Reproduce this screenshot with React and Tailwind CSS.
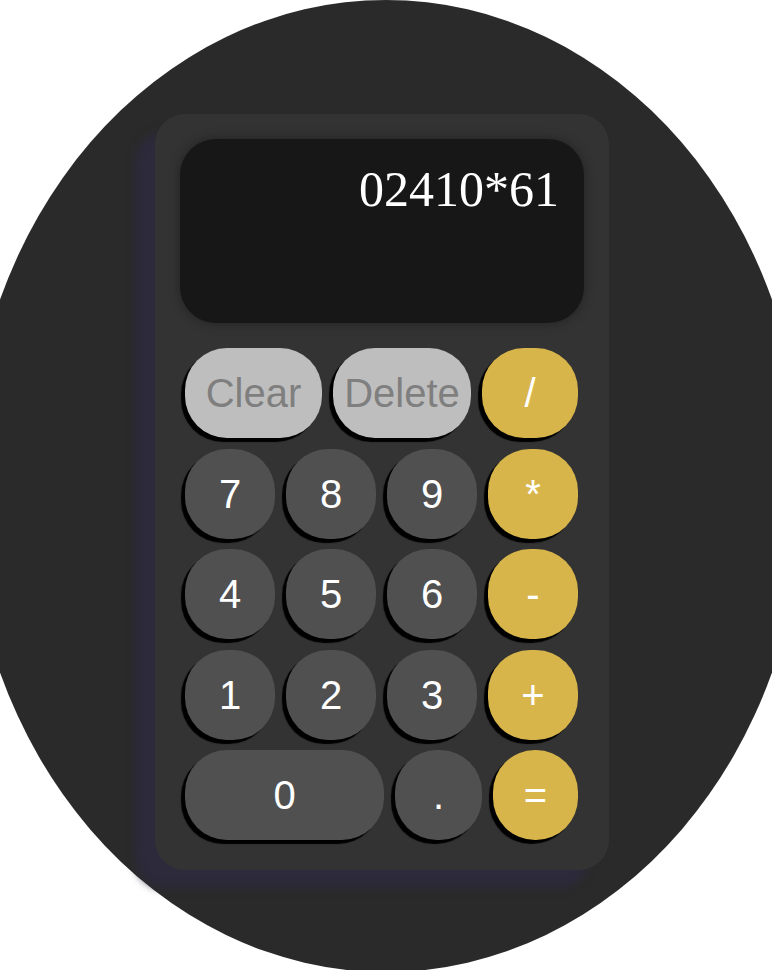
import React from "react";

const btnBase =
  "h-[90px] flex items-center justify-center rounded-[42px] shadow-[-4px_4px_1px_#000] text-[40px] leading-none";
const num = `${btnBase} bg-[#505050] text-white`;
const op = `${btnBase} bg-[#d8b54b] text-white`;
const gray = `${btnBase} bg-[#bebebe] text-[#7f7f7f]`;

export default function App() {
  return (
    <div
      className="relative w-[772px] h-[970px] bg-white overflow-hidden"
      style={{ fontFamily: '"Liberation Sans", Arial, sans-serif' }}
    >
      <div className="w-[836px] h-[972px] -ml-[32px] rounded-[50%] bg-[#2a2a2a] pt-[114px] pl-[187px]">
        <div className="w-[454px] h-[756px] rounded-[30px] bg-[#333333] shadow-[-20px_18px_8px_#2d2a3b] px-[25px] pt-[25px]">
          <div
            className="h-[184px] rounded-[36px] bg-[#181718] shadow-[0_0_12px_rgba(0,0,0,0.35)] pt-[25px] pr-[25px] text-right text-white text-[50px] leading-none"
            style={{ fontFamily: '"Liberation Serif", "Times New Roman", serif' }}
          >
            02410*61
          </div>
          <div className="mt-[25px] px-[5px] flex flex-col">
            <div className="flex gap-[11px]">
              <div className={`${gray} w-[137px]`}>Clear</div>
              <div className={`${gray} w-[138px]`}>Delete</div>
              <div className={`${op} w-[96px]`}>/</div>
            </div>
            <div className="flex gap-[11px] mt-[11px]">
              <div className={`${num} w-[90px]`}>7</div>
              <div className={`${num} w-[90px]`}>8</div>
              <div className={`${num} w-[90px]`}>9</div>
              <div className={`${op} w-[90px]`}>*</div>
            </div>
            <div className="flex gap-[11px] mt-[10px]">
              <div className={`${num} w-[90px]`}>4</div>
              <div className={`${num} w-[90px]`}>5</div>
              <div className={`${num} w-[90px]`}>6</div>
              <div className={`${op} w-[90px]`}>-</div>
            </div>
            <div className="flex gap-[11px] mt-[11px]">
              <div className={`${num} w-[90px]`}>1</div>
              <div className={`${num} w-[90px]`}>2</div>
              <div className={`${num} w-[90px]`}>3</div>
              <div className={`${op} w-[90px]`}>+</div>
            </div>
            <div className="flex gap-[11px] mt-[10px]">
              <div className={`${num} w-[199px]`}>0</div>
              <div className={`${num} w-[87px]`}>.</div>
              <div className={`${op} w-[85px]`}>=</div>
            </div>
          </div>
        </div>
      </div>
    </div>
  );
}
